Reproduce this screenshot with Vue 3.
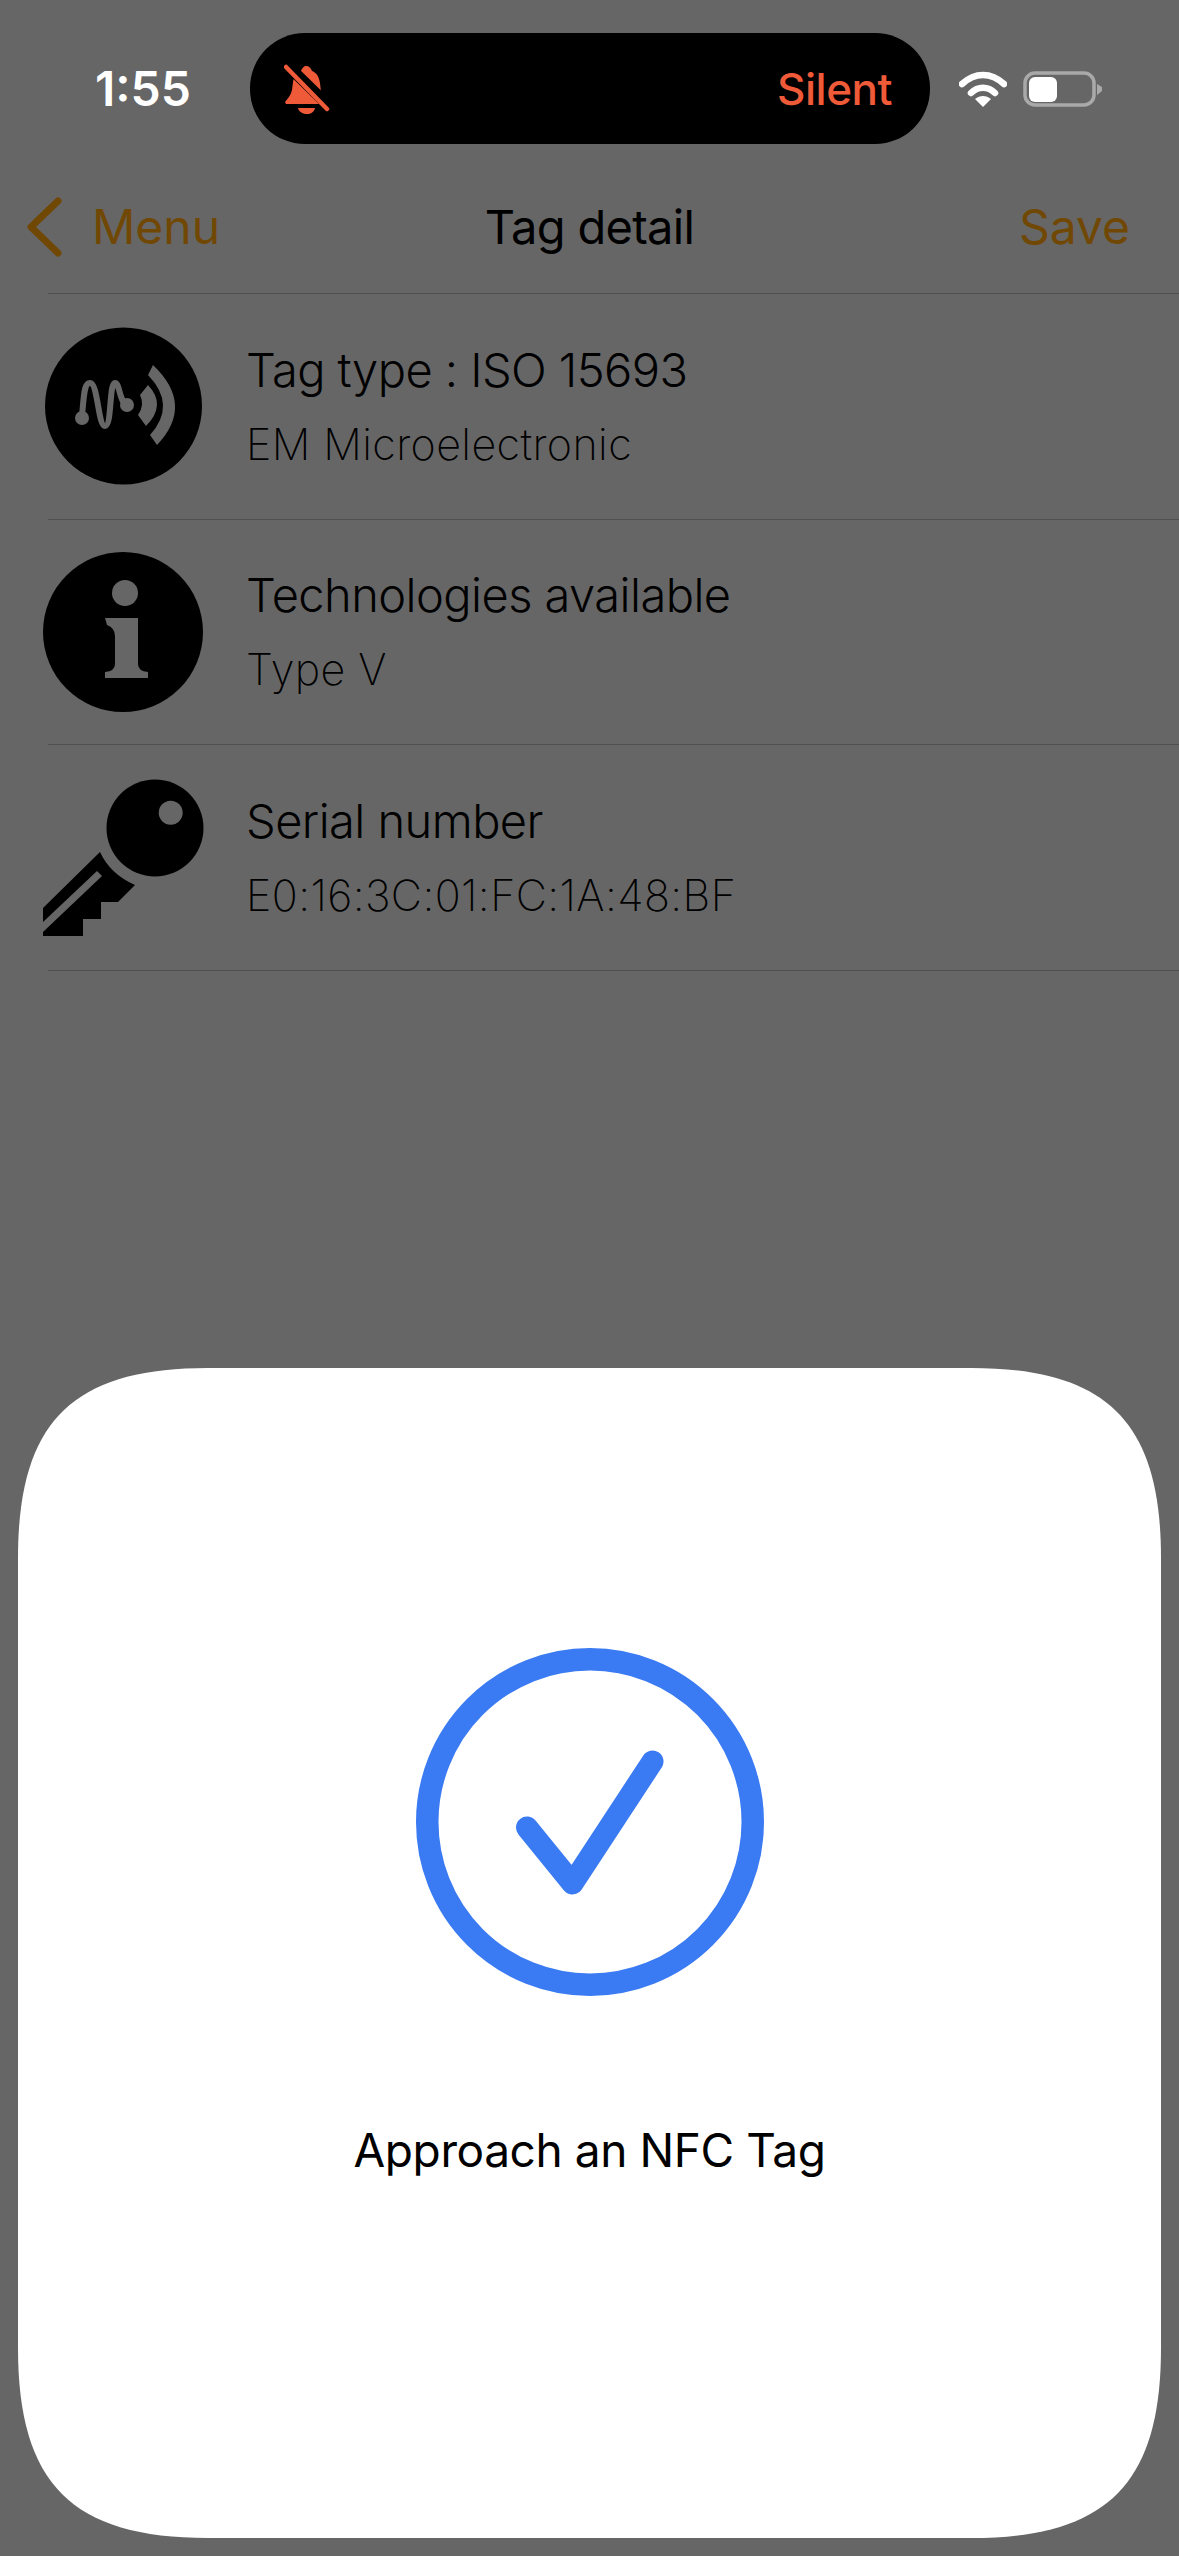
<script setup>
const rows = [
  { icon: 'wave', title: 'Tag type : ISO 15693', sub: 'EM Microelectronic' },
  { icon: 'info', title: 'Technologies available', sub: 'Type V' },
  { icon: 'key', title: 'Serial number', sub: 'E0:16:3C:01:FC:1A:48:BF' }
]
</script>

<template>
  <div class="screen">
    <header class="status">
      <span class="time">1:55</span>
      <div class="island">
        <svg class="bell" width="46" height="50" viewBox="0 0 46 50">
          <path fill="#ef5a38" d="M22 2c3 0 5 2 6 5 5 2 7 6 8 12l1 9 7 10-2 2H2l-1-2c3-4 6-7 7-12l1-8c1-6 4-10 8-11 1-3 3-5 5-5z" />
          <path fill="#ef5a38" d="M14 44h17c-1 4-4 6-8 6s-8-2-9-6z" />
          <path d="M-1 -3 L47 44" stroke="#000" stroke-width="11" />
          <path d="M2 3 L43 45" stroke="#ef5a38" stroke-width="4.5" stroke-linecap="round" />
        </svg>
        <span class="silent">Silent</span>
      </div>
      <div class="indicators">
        <svg width="48" height="36" viewBox="0 0 48 36">
          <path fill="none" stroke="#fff" stroke-width="6.500" d="M3 13C16 1 32 1 45 13" stroke-linecap="round" />
          <path fill="none" stroke="#fff" stroke-width="6.500" d="M12 22C19 15 29 15 36 22" stroke-linecap="round" />
          <path fill="#fff" d="M16 28c5-4 11-4 16 0l-8 8z" />
        </svg>
        <svg width="80" height="36" viewBox="0 0 80 36">
          <rect x="2" y="2" width="69" height="32" rx="10" fill="none" stroke="#a9a9a9" stroke-width="3.500" />
          <rect x="6" y="6" width="28" height="25" rx="6" fill="#fff" />
          <path fill="#a9a9a9" d="M74 13l5 3v4l-5 4z" />
        </svg>
      </div>
    </header>

    <nav class="navbar">
      <div class="back">
        <svg width="36" height="60" viewBox="0 0 36 60">
          <path d="M31 4L4 30l27 26" fill="none" stroke="#714803" stroke-width="7" stroke-linecap="round" stroke-linejoin="round" />
        </svg>
        <span>Menu</span>
      </div>
      <span class="nav-title">Tag detail</span>
      <span class="save">Save</span>
    </nav>

    <ul class="list">
      <li v-for="row in rows" :key="row.title" class="row">
        <svg class="icon" width="170" height="170" viewBox="40 321 170 170" v-if="row.icon === 'wave'">
          <circle cx="123.5" cy="406" r="78.500" fill="#000" />
          <path fill="none" stroke="#666" stroke-width="6" stroke-linecap="round" d="M82 416C84 395 84 383 90 383C98 383 98 426 105 426C112 426 109 383 115 383C120 383 119 402 127 405" />
          <circle cx="82" cy="418" r="7" fill="#666" />
          <circle cx="127" cy="405" r="7" fill="#666" />
          <path d="M148 385Q167 405 146 426L138 415Q145 405 140 395Z" fill="#666" />
          <path d="M153 365Q195 405 157 445L150 435Q177 405 148 375Z" fill="#666" />
        </svg>
        <svg class="icon" width="170" height="170" viewBox="40 547 170 170" v-else-if="row.icon === 'info'">
          <circle cx="123" cy="632" r="80" fill="#000" />
          <circle cx="125" cy="593" r="13" fill="#666" />
          <path fill="#666" d="M105 618H138V664Q138 671 148 672V678H105V672Q115 671 115 664V636Q115 628 107 625Z" />
        </svg>
        <svg class="icon" width="170" height="170" viewBox="40 772 170 170" v-else>
          <circle cx="155" cy="828" r="48.500" fill="#000" />
          <circle cx="170.700" cy="812.700" r="12" fill="#666" />
          <path d="M43 908L100 852Q110 874 135 885L118 902H101V919H83V936H43Z" fill="#000" />
          <path d="M43 922L97 871L102 876L43 932Z" fill="#666" />
        </svg>
        <div class="texts">
          <span class="title">{{ row.title }}</span>
          <span class="sub">{{ row.sub }}</span>
        </div>
      </li>
    </ul>

    <section class="sheet">
      <svg class="check" width="350" height="350" viewBox="0 0 350 350">
        <circle cx="175" cy="175" r="162.750" fill="none" stroke="#3a7af3" stroke-width="22.500" />
        <path d="M112 180.500L157.500 236.500L237.500 114.500" fill="none" stroke="#3a7af3" stroke-width="22" stroke-linecap="round" stroke-linejoin="round" />
      </svg>
      <p class="prompt">Approach an NFC Tag</p>
    </section>
  </div>
</template>

<style>
html, body { margin: 0; background: #666; }
</style>

<style scoped>
.screen {
  position: relative;
  width: 1179px;
  height: 2556px;
  overflow: hidden;
  background: #666;
  font-family: Inter, "Liberation Sans", sans-serif;
  color: #000;
}
.status {
  display: flex;
  align-items: center;
  height: 111px;
  padding-top: 33px;
  padding-left: 95px;
}
.time {
  width: 155px;
  font-size: 48px;
  font-weight: 600;
  color: #fff;
}
.island {
  display: flex;
  align-items: center;
  justify-content: space-between;
  box-sizing: border-box;
  width: 680px;
  height: 111px;
  padding: 0 38px 0 34px;
  border-radius: 55px;
  background: #000;
}
.bell { display: block; }
.silent {
  font-size: 44px;
  font-weight: 500;
  color: #ef5a38;
  letter-spacing: -0.5px;
}
.indicators {
  display: flex;
  align-items: center;
  gap: 16px;
  margin-left: 29px;
}
.indicators svg { display: block; }
.navbar {
  display: grid;
  grid-template-columns: 1fr auto 1fr;
  align-items: center;
  height: 149px;
  padding: 16px 27px 0;
  box-sizing: border-box;
  font-size: 48px;
}
.back {
  display: flex;
  align-items: center;
  gap: 29px;
  color: #714803;
}
.nav-title {
  font-size: 47px;
  letter-spacing: -0.7px;
}
.save {
  justify-self: end;
  margin-right: 22px;
  color: #714803;
}
.list {
  margin: 0 0 0 48px;
  padding: 0;
  list-style: none;
  border-top: 1px solid #505050;
}
.row {
  display: flex;
  align-items: center;
  height: 224.5px;
  border-bottom: 1px solid #505050;
}
.icon {
  flex: none;
  margin-left: -8px;
  margin-right: 36px;
}
.texts {
  display: flex;
  flex-direction: column;
  gap: 15px;
}
.title {
  font-size: 47px;
  font-weight: 300;
  line-height: 60px;
  letter-spacing: -0.55px;
}
.sub {
  font-size: 43px;
  font-weight: 170;
  line-height: 58px;
  letter-spacing: 0.4px;
}
.sheet {
  position: absolute;
  left: 18px;
  top: 1368px;
  display: flex;
  flex-direction: column;
  align-items: center;
  width: 1143px;
  height: 1170px;
  padding-top: 279px;
  box-sizing: border-box;
  background: #fff;
  clip-path: path("M0 190C0 54 54 0 190 0H953C1089 0 1143 54 1143 190V980C1143 1116 1089 1170 953 1170H190C54 1170 0 1116 0 980Z");
}
.check { display: block; }
.prompt {
  margin: 123px 0 0;
  font-size: 46px;
  font-weight: 400;
  line-height: 60px;
  letter-spacing: -0.4px;
}
</style>
